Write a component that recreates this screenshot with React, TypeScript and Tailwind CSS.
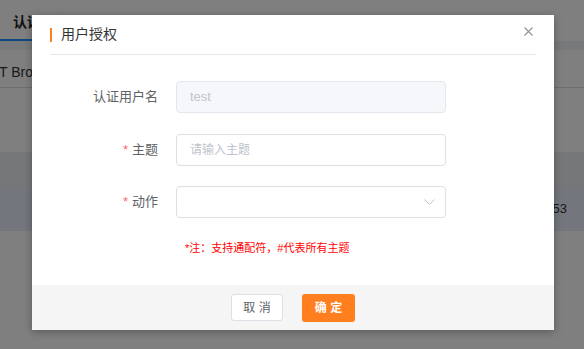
import React from "react";

const font = "font-['Liberation_Sans','Noto_Sans_CJK_SC',sans-serif]";

function Background() {
  return (
    <div className="flex h-full w-full flex-col bg-white">
      <div className="flex h-[41px]">
        <div className="w-[120px] border-b-2 border-[#1890ff] pl-[13px] pt-[14px] text-[14px] font-bold leading-[16px] text-[#222]">
          认证信息
        </div>
        <div className="flex-1" />
      </div>
      <div className="h-[9px] bg-[#f0f2f5]" />
      <div className="flex h-[38px] items-center border-b border-[#dcdcdc] pt-[8px] text-[14px] text-[#333]">
        <span className="-ml-[1px]">T Broker 用户管理</span>
      </div>
      <div className="h-[64px]" />
      <div className="h-[35px] bg-[#eceff3]" />
      <div className="flex h-[44px] items-center justify-end bg-[#e6edfb] pr-[17px] text-[13px] text-[#333]">
        2021-06-18 10:25:53
      </div>
    </div>
  );
}

function Label({ text, required }: { text: string; required?: boolean }) {
  return (
    <div className="w-[126px] text-right text-[13px] text-[#606266]">
      {required && <span className="mr-[4px] text-[#f56c6c]">*</span>}
      {text}
    </div>
  );
}

export default function App() {
  return (
    <div className={`relative h-[349px] w-[584px] overflow-hidden ${font}`}>
      <Background />
      <div className="absolute inset-0 bg-black/50" />

      <div className="absolute left-[32px] top-[15px] flex w-[522px] flex-col bg-white shadow-[0_2px_8px_rgba(0,0,0,0.3)]">
        <div className="mx-[18px] flex h-[40px] items-center border-b border-[#e4e7ed]">
          <div className="h-[14px] w-[2px] bg-[#ff7f1e]" />
          <div className="ml-[9px] text-[14px] text-[#333]">用户授权</div>
          <svg
            className="mb-[6px] ml-auto mr-[3px]"
            width="9"
            height="9"
            viewBox="0 0 9 9"
            fill="none"
            stroke="#909399"
            strokeWidth="1.1"
          >
            <path d="M0.5 0.5L8.5 8.5M8.5 0.5L0.5 8.5" />
          </svg>
        </div>

        <div className="flex h-[230px] flex-col pt-[26px]">
          <div className="flex items-center">
            <Label text="认证用户名" />
            <div className="ml-[18px] flex h-[32px] w-[270px] items-center rounded-[4px] border border-[#e4e7ed] bg-[#f5f7fa] pl-[13px] text-[13px] text-[#c0c4cc]">
              test
            </div>
          </div>

          <div className="mt-[21px] flex items-center">
            <Label text="主题" required />
            <div className="ml-[18px] flex h-[32px] w-[270px] items-center rounded-[4px] border border-[#dcdfe6] bg-white pl-[13px] text-[12px] text-[#c0c4cc]">
              请输入主题
            </div>
          </div>

          <div className="mt-[20px] flex items-center">
            <Label text="动作" required />
            <div className="ml-[18px] flex h-[32px] w-[270px] items-center justify-end rounded-[4px] border border-[#dcdfe6] bg-white pr-[10px]">
              <svg width="11" height="6" viewBox="0 0 11 6" fill="none" stroke="#c0c4cc" strokeWidth="1">
                <path d="M0.5 0.5L5.5 5.5L10.5 0.5" />
              </svg>
            </div>
          </div>

          <div className="mt-[22px] pl-[153px] text-[11px] leading-[16px] text-[#ff0000]">
            *注：支持通配符，#代表所有主题
          </div>
        </div>

        <div className="flex h-[45px] justify-center gap-[19px] bg-[#f5f5f5] pt-[9px]">
          <button className="h-[27px] w-[52px] rounded-[3px] border border-[#dcdfe6] bg-white text-[12px] text-[#606266]">
            取 消
          </button>
          <button className="h-[28px] w-[53px] rounded-[3px] bg-[#ff7f1e] text-[12px] font-bold text-white">
            确 定
          </button>
        </div>
      </div>
    </div>
  );
}
